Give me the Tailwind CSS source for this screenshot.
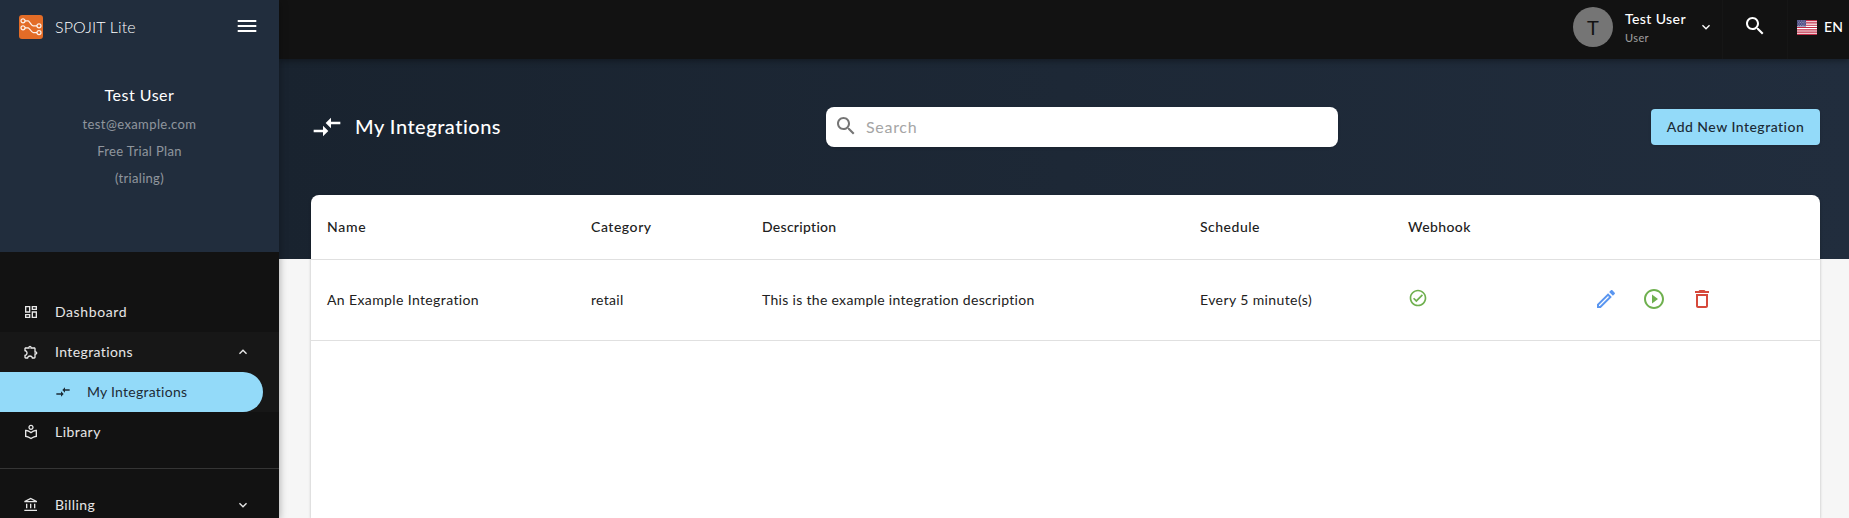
<!DOCTYPE html>
<html lang="en">
<head>
<meta charset="utf-8">
<title>SPOJIT Lite</title>
<script src="https://cdn.jsdelivr.net/npm/@tailwindcss/browser@4"></script>
</head>
<body class="flex h-[518px] w-[1849px] overflow-hidden bg-[#f6f6f6] font-[Lato,sans-serif] text-[14px] leading-5 text-[#212121]">

<aside class="relative z-20 flex h-full w-[279px] shrink-0 flex-col bg-[#121212] text-white/90 shadow-[0_2px_8px_rgba(0,0,0,0.35)]">
  <div class="flex h-[252px] shrink-0 flex-col bg-[#212d3d]">
    <div class="flex h-[54px] items-center pl-[19px] pr-[20px]">
      <svg class="size-6" viewBox="0 0 24 24"><rect width="24" height="24" rx="3" fill="#e36c27"/><g fill="none" stroke="#fff" stroke-opacity=".9" stroke-width="1.2"><circle cx="4" cy="5.8" r="2"/><circle cx="4" cy="12.8" r="2"/><circle cx="20" cy="10.8" r="2"/><circle cx="20" cy="17.6" r="2"/><path d="M6 5.8h3.2c1 0 3.3 5 5 5H18M6 12.8h3.2c1 0 3.300 4.800 5 4.800H18"/></g></svg>
      <span class="ml-3 grow text-[16px] font-light tracking-[0.15px] text-white">SPOJIT Lite</span>
      <svg class="relative -top-px size-6 shrink-0" viewBox="0 0 24 24" fill="#fff"><path d="M2.700 18h18.600v-2H2.700v2zm0-5h18.600v-2H2.700v2zm0-7v2h18.600V6H2.700z"/></svg>
    </div>
    <div class="flex flex-col items-center pt-[29px]">
      <div class="h-[27px] leading-6 text-[16px] tracking-[0.5px] text-white">Test User</div>
      <div class="flex h-[27px] items-center text-[13px] tracking-[0.4px] text-white/50">test@example.com</div>
      <div class="flex h-[27px] items-center text-[13px] tracking-[0.35px] text-white/50">Free Trial Plan</div>
      <div class="flex h-[27px] items-center text-[13px] tracking-[0.3px] text-white/50">(trialing)</div>
    </div>
  </div>

  <nav class="flex flex-col pt-10">
    <a class="flex h-10 items-center pl-[23px]"><svg class="size-4" viewBox="0 0 24 24" fill="currentColor"><path d="M19 5v2h-4V5h4M9 5v6H5V5h4m10 8v6h-4v-6h4M9 17v2H5v-2h4M21 3h-8v6h8V3zM11 3H3v10h8V3zm10 8h-8v10h8V11zm-10 4H3v6h8v-6z"/></svg><span class="ml-4 tracking-[0.6px]">Dashboard</span></a>
    <div class="bg-[#171717]">
      <a class="flex h-10 items-center pl-[23px] pr-7"><svg class="size-4" viewBox="0 0 24 24" fill="currentColor"><path d="M10.500 4.500c.28 0 .5.22.5.5v2h6v6h2c.28 0 .5.22.5.5s-.22.5-.5.5h-2v6h-2.120c-.68-1.750-2.390-3-4.380-3s-3.700 1.250-4.380 3H4v-2.120c1.750-.68 3-2.390 3-4.380 0-1.990-1.240-3.700-2.990-4.380L4 7h6V5c0-.28.22-.5.5-.5m0-2C9.120 2.500 8 3.620 8 5H4c-1.100 0-1.990.9-1.990 2v3.800h.29c1.490 0 2.700 1.210 2.700 2.700s-1.210 2.700-2.700 2.700H2V20c0 1.100.9 2 2 2h3.800v-.3c0-1.490 1.210-2.700 2.700-2.700s2.700 1.210 2.700 2.700v.3H17c1.100 0 2-.9 2-2v-4c1.380 0 2.500-1.120 2.500-2.500S20.380 11 19 11V7c0-1.100-.9-2-2-2h-4c0-1.380-1.120-2.500-2.500-2.500z"/></svg><span class="ml-4 grow tracking-[0.4px]">Integrations</span><svg class="size-4" viewBox="0 0 24 24" fill="currentColor"><path d="M12 8l-6 6 1.410 1.410L12 10.830l4.590 4.580L18 14z"/></svg></a>
      <a class="flex h-10 w-[263px] items-center rounded-r-full bg-[#93daf9] pl-[55px] text-[#1d2b36]"><svg class="size-4" viewBox="0 0 24 24" fill="currentColor"><path d="M9.010 14H2v2h7.010v3L13 15l-3.990-4v3zm5.980-1v-3H22V8h-7.010V5L11 9l3.990 4z"/></svg><span class="ml-4 tracking-[0.25px]">My Integrations</span></a>
    </div>
    <a class="flex h-10 items-center pl-[23px]"><svg class="size-4" viewBox="0 0 24 24" fill="currentColor"><path d="M16 5c0-2.210-1.790-4-4-4S8 2.790 8 5s1.790 4 4 4 4-1.790 4-4zm-4 2c-1.100 0-2-.9-2-2s.9-2 2-2 2 .9 2 2-.9 2-2 2zm9 1.500c-.5 0-5 0-9 3.100-4-3.100-8.500-3.100-9-3.100v11c3.500 0 6.600 1.400 9 3.500 2.400-2.100 5.500-3.500 9-3.500v-11zm-2 9.200c-2.500.3-4.900 1.300-7 2.800-2.100-1.500-4.500-2.500-7-2.800v-6.900c2.600.5 5 1.700 7 3.300 2-1.600 4.400-2.800 7-3.300v6.900z"/></svg><span class="ml-4 tracking-[0.45px]">Library</span></a>
    <div class="my-4 h-px shrink-0 bg-white/15"></div>
    <a class="flex h-10 items-center pl-[23px] pr-7"><svg class="size-4" viewBox="0 0 24 24" fill="currentColor"><path d="M6.500 10h-2v7h2v-7zm6 0h-2v7h2v-7zm8.500 9H2v2h19v-2zm-2.500-9h-2v7h2v-7zm-7-6.740L16.710 6H6.290l5.210-2.740m0-2.260L2 6v2h19V6l-9.500-5z"/></svg><span class="ml-4 grow tracking-[0.4px]">Billing</span><svg class="size-4" viewBox="0 0 24 24" fill="currentColor"><path d="M16.590 8.590L12 13.170 7.410 8.590 6 10l6 6 6-6z"/></svg></a>
  </nav>
</aside>

<div class="flex min-w-0 grow flex-col">
  <header class="relative z-10 flex h-[59px] shrink-0 items-start justify-end bg-[#121212] text-white shadow-[0_2px_6px_rgba(0,0,0,0.35)]">
    <div class="flex h-[54px] items-center">
      <div class="flex size-10 items-center justify-center rounded-full bg-[#757575] text-[20px] text-[#121212]">T</div>
      <div class="ml-3 w-[62px]">
        <div class="h-[19px] font-medium leading-[19px] tracking-[0.4px]">Test User</div>
        <div class="h-[18px] text-[11px] leading-[19px] tracking-[0.4px] text-white/60">User</div>
      </div>
      <svg class="ml-[11px] size-4" viewBox="0 0 24 24" fill="currentColor"><path d="M16.590 8.590L12 13.170 7.410 8.590 6 10l6 6 6-6z"/></svg>
    </div>
    <div class="ml-[8px] flex h-[59px] w-[66px] items-start justify-center border-x border-white/[0.02] pt-[14px]"><svg class="size-6" viewBox="0 0 24 24" fill="currentColor"><path d="M15.500 14h-.79l-.28-.27C15.410 12.590 16 11.110 16 9.500 16 5.910 13.090 3 9.500 3S3 5.910 3 9.500 5.910 16 9.500 16c1.610 0 3.090-.59 4.230-1.570l.27.28v.79l5 4.990L20.490 19l-4.990-5zm-6 0C7.010 14 5 11.990 5 9.500S7.010 5 9.500 5 14 7.010 14 9.500 11.990 14 9.500 14z"/></svg></div>
    <div class="flex h-[54px] w-[61px] items-center pl-[9px]">
      <svg class="h-[15px] w-5 shrink-0" viewBox="0 0 20 15"><path fill="#fff" d="M0 0h20v15H0z"/><path stroke="#bf2a45" stroke-width="1.150" d="M0 .58h20M0 2.890h20M0 5.200h20M0 7.500h20M0 9.810h20M0 12.120h20M0 14.420h20"/><path fill="#4a4a80" d="M0 0h9v6.500H0z"/><path stroke="#c5c5dc" stroke-width=".7" stroke-dasharray=".8 .9" d="M.6 1h8M1.400 2.500h7.200M.6 4h8M1.400 5.500h7.200"/></svg>
      <span class="ml-[7px] font-medium tracking-[0.2px]">EN</span>
    </div>
  </header>

  <main class="flex grow flex-col bg-[linear-gradient(to_right,#19232f,#212d3d)] bg-[length:100%_200px] bg-no-repeat px-8">
    <div class="mr-[-3px] flex h-[136px] w-[1509px] shrink-0 items-center">
      <div class="flex w-[515px] items-center text-white">
        <svg class="size-8" viewBox="0 0 24 24" fill="currentColor"><path d="M9.010 14H2v2h7.010v3L13 15l-3.990-4v3zm5.980-1v-3H22V8h-7.010V5L11 9l3.990 4z"/></svg>
        <h1 class="ml-3 pb-0.5 text-[20px] font-medium tracking-[0.5px]">My Integrations</h1>
      </div>
      <div class="flex h-10 w-[512px] items-center rounded-lg bg-white pl-2 shadow"><svg class="relative -top-px size-6 text-[#757575]" viewBox="0 0 24 24" fill="currentColor"><path d="M15.500 14h-.79l-.28-.27C15.410 12.590 16 11.110 16 9.500 16 5.910 13.090 3 9.500 3S3 5.910 3 9.500 5.910 16 9.500 16c1.610 0 3.090-.59 4.230-1.570l.27.28v.79l5 4.990L20.490 19l-4.990-5zm-6 0C7.010 14 5 11.990 5 9.500S7.010 5 9.500 5 14 7.010 14 9.500 11.990 14 9.500 14z"/></svg><span class="ml-2 pb-px text-[16px] tracking-[0.7px] text-[#a5a5a5]">Search</span></div>
      <div class="flex w-[482px] justify-end"><button class="h-9 w-[169px] rounded bg-[#93daf9] font-medium tracking-[0.48px] text-[#1b2a35] shadow">Add New Integration</button></div>
    </div>
    <div class="mr-[-3px] w-[1509px] grow rounded-t-lg bg-white shadow-[0_1px_3px_rgba(0,0,0,0.25)]">
      <div class="grid h-[65px] grid-cols-[264px_171px_438px_208px_1fr] items-center border-b border-[#e0e0e0] pl-4 font-medium">
        <span class="tracking-[0.7px]">Name</span><span class="tracking-[0.55px]">Category</span><span class="tracking-[0.28px]">Description</span><span class="tracking-[0.5px]">Schedule</span><span class="tracking-[0.4px]">Webhook</span>
      </div>
      <div class="grid h-[81px] grid-cols-[264px_171px_438px_208px_180px_1fr] items-center border-b border-[#e0e0e0] pl-4">
        <span class="tracking-[0.38px]">An Example Integration</span><span class="tracking-[0.3px]">retail</span><span class="tracking-[0.31px]">This is the example integration description</span><span class="tracking-[0.4px]">Every 5 minute(s)</span>
        <svg class="relative -top-[2px] size-5 text-[#6fb04f]" viewBox="0 0 24 24" fill="currentColor"><path d="M12 2C6.480 2 2 6.480 2 12s4.480 10 10 10 10-4.480 10-10S17.520 2 12 2zm0 18c-4.410 0-8-3.590-8-8s3.590-8 8-8 8 3.590 8 8-3.590 8-8 8zm4.590-12.420L10 14.170l-2.590-2.580L6 13l4 4 8-8z"/></svg>
        <div class="relative -top-px flex gap-6 pl-[6px]">
          <svg class="size-6 text-[#5a96f0]" viewBox="0 0 24 24" fill="currentColor"><path d="M14.060 9.020l.92.92L5.920 19H5v-.92l9.060-9.060M17.660 3c-.25 0-.51.1-.7.29l-1.830 1.830 3.750 3.750 1.830-1.830c.39-.39.39-1.020 0-1.410l-2.340-2.340c-.2-.2-.45-.29-.71-.29zm-3.600 3.190L3 17.250V21h3.750L17.810 9.940l-3.750-3.750z"/></svg>
          <svg class="size-6 text-[#6fb04f]" viewBox="0 0 24 24" fill="currentColor"><path d="M10 16.500l6-4.500-6-4.500v9zM12 2C6.480 2 2 6.480 2 12s4.480 10 10 10 10-4.480 10-10S17.520 2 12 2zm0 18c-4.410 0-8-3.590-8-8s3.590-8 8-8 8 3.590 8 8-3.590 8-8 8z"/></svg>
          <svg class="size-6 text-[#d6493b]" viewBox="0 0 24 24" fill="currentColor"><path d="M6 19c0 1.100.9 2 2 2h8c1.100 0 2-.9 2-2V7H6v12zM8 9h8v10H8V9zm7.500-5l-1-1h-5l-1 1H5v2h14V4z"/></svg>
        </div>
      </div>
    </div>
  </main>
</div>
</body>
</html>
